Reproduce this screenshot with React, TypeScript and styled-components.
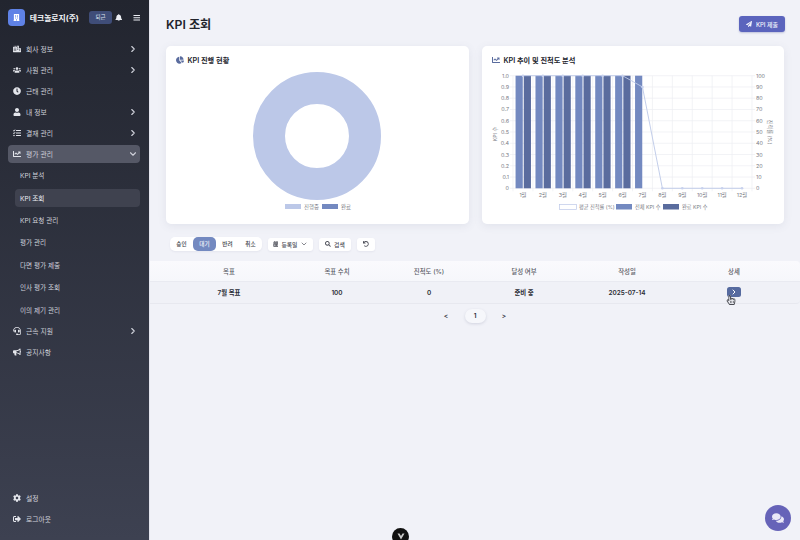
import React from 'react'
import styled, { createGlobalStyle } from 'styled-components'
import {
  FaBars,
  FaBell,
  FaBullhorn,
  FaBuilding,
  FaCalendarAlt,
  FaChartLine,
  FaChartPie,
  FaClock,
  FaCog,
  FaComments,
  FaHeadset,
  FaPaperPlane,
  FaRegHandPointer,
  FaSearch,
  FaSignOutAlt,
  FaTasks,
  FaUndo,
  FaUser,
  FaUsers,
  FaCity,
} from 'react-icons/fa'
import { ChevronDown, ChevronRight } from 'lucide-react'

const GlobalStyle = createGlobalStyle`
  html, body {
    margin: 0;
    padding: 0;
    width: 800px;
    height: 540px;
    overflow: hidden;
    font-family: Inter, "Noto Sans CJK KR", sans-serif;
  }
  * { box-sizing: border-box; }
`

const Page = styled.div`
  position: relative;
  display: flex;
  width: 800px;
  height: 540px;
  overflow: hidden;
  background: #f1f2f8;
`

const Sidebar = styled.aside`
  display: flex;
  flex-direction: column;
  flex: 0 0 150px;
  min-width: 0;
  height: 540px;
  padding: 0 9px 11px 8px;
  border-right: 1px solid #e4e5ee;
  background: linear-gradient(180deg, #22252f 0%, #3d4151 100%);
  color: #d9dbe3;
`

const Brand = styled.div`
  display: flex;
  align-items: center;
  height: 38.5px;
  padding-bottom: 4px;
`

const Logo = styled.div`
  display: flex;
  align-items: center;
  justify-content: center;
  width: 17px;
  height: 17px;
  border-radius: 4px;
  background: #5f82e6;
  color: #fff;
  font-size: 7px;
`

const BrandName = styled.span`
  margin-left: 5px;
  width: 60px;
  color: #f4f5f8;
  font-size: 7.8px;
  font-weight: 700;
  white-space: nowrap;
`

const LeaveButton = styled.div`
  display: flex;
  align-items: center;
  justify-content: center;
  width: 23px;
  height: 13px;
  border-radius: 3px;
  background: #3f4d78;
  color: #dfe3f0;
  font-size: 5.5px;
`

const HeaderIcon = styled.span<{ $gap: number }>`
  display: flex;
  margin-left: ${({ $gap }) => $gap}px;
  color: #eceef3;
  font-size: 7.5px;
`

const Nav = styled.nav`
  display: flex;
  flex-direction: column;
`

const NavRow = styled.div<{ $open?: boolean }>`
  display: flex;
  align-items: center;
  gap: 5px;
  height: ${({ $open }) => ($open ? '18px' : '21px')};
  margin: ${({ $open }) => ($open ? '1.5px 0 1px' : '0')};
  padding: 0 2px 0 5px;
  border-radius: 4px;
  background: ${({ $open }) => ($open ? '#555866' : 'transparent')};
  color: #cfd1da;
  font-size: 6.8px;
  font-weight: 400;
  svg { flex-shrink: 0; }
`

const RowIcon = styled.span`
  display: flex;
  color: #e4e6ec;
  font-size: 8px;
`

const RowLabel = styled.span`
  flex: 1;
`

const SubRow = styled.div<{ $active?: boolean }>`
  display: flex;
  align-items: center;
  height: 22.4px;
  padding-left: 5px;
  margin-left: 7px;
  color: ${({ $active }) => ($active ? '#eceef3' : '#cfd1da')};
  font-size: 6.6px;
  font-weight: 400;
  position: relative;
  z-index: 0;

  &::before {
    content: '';
    display: ${({ $active }) => ($active ? 'block' : 'none')};
    position: absolute;
    z-index: -1;
    inset: 2.5px 0 2px 0;
    border-radius: 4px;
    background: #3f424f;
  }
`

const NavBottom = styled(Nav)`
  margin-top: auto;
`

const Main = styled.main`
  display: flex;
  flex-direction: column;
  flex: 1;
  min-width: 0;
`

const Head = styled.header`
  display: flex;
  align-items: center;
  justify-content: space-between;
  height: 46px;
  padding: 2px 15px 0 16px;
`

const Title = styled.h1`
  margin: 0;
  color: #22242c;
  font-size: 12.2px;
  font-weight: 600;
`

const SubmitButton = styled.div`
  display: flex;
  align-items: center;
  justify-content: center;
  gap: 4px;
  width: 46px;
  height: 16px;
  border-radius: 3px;
  background: #5b64bd;
  color: #f0f1fb;
  font-size: 6px;
  font-weight: 500;
  box-shadow: 0 1px 2px rgba(70, 76, 150, 0.3);
`

const Charts = styled.section`
  display: grid;
  grid-template-columns: 303px 302px;
  gap: 13px;
  height: 178px;
  padding-left: 16px;
  margin-bottom: 13px;
`

const Card = styled.div`
  display: flex;
  flex-direction: column;
  border-radius: 5px;
  background: #fff;
  box-shadow: 0 2px 8px rgba(90, 95, 130, 0.1);
`

const CardTitle = styled.div`
  display: flex;
  align-items: center;
  gap: 3.5px;
  height: 22px;
  padding: 6px 0 0 10px;
  color: #22242c;
  font-size: 7.2px;
  font-weight: 600;
  svg { color: #5a6c9e; font-size: 8px; }
`

const ChartSvg = styled.svg`
  display: block;
  flex: none;
`

const Filters = styled.div`
  display: flex;
  align-items: center;
  gap: 6px;
  height: 14px;
  padding-left: 20px;
  margin-bottom: 10px;
`

const Segment = styled.div`
  display: flex;
  height: 14px;
  border-radius: 5px;
  background: #fff;
  box-shadow: 0 1px 2px rgba(90, 95, 130, 0.08);
`

const SegmentItem = styled.div<{ $active?: boolean }>`
  display: flex;
  align-items: center;
  justify-content: center;
  width: 23px;
  border-radius: 5px;
  background: ${({ $active }) => ($active ? '#7389c0' : 'transparent')};
  color: ${({ $active }) => ($active ? '#f2f4fa' : '#3a3c46')};
  font-size: 5.6px;
  font-weight: 500;
`

const FilterButton = styled.div<{ $width: number }>`
  display: flex;
  align-items: center;
  justify-content: center;
  gap: 3px;
  width: ${({ $width }) => $width}px;
  height: 13px;
  border-radius: 3px;
  background: #fff;
  color: #4b4d57;
  font-size: 5.8px;
  font-weight: 500;
  box-shadow: 0 1px 2px rgba(90, 95, 130, 0.08);
`

const TableHead = styled.div`
  display: grid;
  grid-template-columns: 116px 100px 84px 106px 100px 114px;
  align-items: center;
  height: 20px;
  padding-left: 21px;
  border-radius: 0 4px 0 0;
  background: linear-gradient(180deg, #fafafd, #f6f7fb);
  color: #585a64;
  font-size: 6.4px;
  font-weight: 500;
  text-align: center;
`

const TableRow = styled(TableHead)`
  position: relative;
  height: 23px;
  border-radius: 0 0 4px 0;
  background: #f0f1f7;
  border-top: 1px solid #e9eaf1;
  border-bottom: 1px solid #e7e8ef;
  color: #2a2c34;
  font-weight: 600;
`

const DetailButton = styled.div`
  display: inline-flex;
  align-items: center;
  justify-content: center;
  width: 14px;
  height: 10px;
  border-radius: 2.5px;
  background: #566a9f;
  color: #fff;
`

const Pointer = styled.span`
  position: absolute;
  left: 576px;
  top: 13px;
  color: #30323a;
  font-size: 10px;
  line-height: 0;

  svg { fill: #4a4c54; filter: drop-shadow(0 0 0.5px #fff); }
`

const Pagination = styled.div`
  display: flex;
  align-items: center;
  justify-content: center;
  gap: 10px;
  height: 14px;
  margin-top: 5px;
  color: #2a2c34;
  font-size: 6.5px;
  font-weight: 600;
`

const PageArrow = styled.span`
  width: 13px;
  text-align: center;
`

const PageNumber = styled.span`
  width: 21px;
  height: 14px;
  margin: 0 2px;
  border-radius: 7px;
  background: #f6f7fb;
  text-align: center;
  line-height: 14px;
  box-shadow: 0 1px 3px rgba(90, 95, 130, 0.2);
`

const ChatBubble = styled.div`
  position: absolute;
  right: 9px;
  bottom: 9px;
  display: flex;
  align-items: center;
  justify-content: center;
  width: 26px;
  height: 26px;
  border-radius: 50%;
  background: #6663b8;
  color: #e9e8f7;
  font-size: 12px;
`

const DevBadge = styled.div`
  position: absolute;
  left: 392px;
  bottom: -5px;
  display: flex;
  justify-content: center;
  width: 17px;
  height: 17px;
  padding-top: 5px;
  border-radius: 50%;
  background: #111;
`

type MenuItem = { icon: React.ReactNode; label: string; arrow?: boolean }

const topMenu: MenuItem[] = [
  { icon: <FaCity />, label: '회사 정보', arrow: true },
  { icon: <FaUsers />, label: '사원 관리', arrow: true },
  { icon: <FaClock />, label: '근태 관리' },
  { icon: <FaUser />, label: '내 정보', arrow: true },
  { icon: <FaTasks />, label: '결재 관리', arrow: true },
]

const subMenu = ['KPI 분석', 'KPI 조회', 'KPI 요청 관리', '평가 관리', '다면 평가 제출', '인사 평가 조회', '이의 제기 관리']

const columns = ['목표', '목표 수치', '진척도 (%)', '달성 여부', '작성일', '상세']

const MenuRow = ({ icon, label, arrow }: MenuItem) => (
  <NavRow>
    <RowIcon>{icon}</RowIcon>
    <RowLabel>{label}</RowLabel>
    {arrow && <ChevronRight size={10} strokeWidth={2.6} />}
  </NavRow>
)

// 차트 좌표는 스크린샷 기준 그대로 viewBox 로 맞춘다
const DonutChart = () => {
  const r = 48
  return (
    <ChartSvg width={303} height={148} viewBox="166 68 303 148">
      <circle cx={317} cy={136} r={r} fill="none" stroke="#bcc8e8" strokeWidth={32} />
      <rect x={285} y={204} width={16} height={5} fill="#bcc8e8" />
      <text x={304} y={208.5} fontSize={5.4} fill="#7a7c85">진행중</text>
      <rect x={322} y={204} width={16} height={5} fill="#7389c0" />
      <text x={341} y={208.5} fontSize={5.4} fill="#7a7c85">완료</text>
    </ChartSvg>
  )
}

const months = ['1월', '2월', '3월', '4월', '5월', '6월', '7월', '8월', '9월', '10월', '11월', '12월']
const progress = [100, 100, 100, 100, 100, 100, 90, 0, 0, 0, 0, 0]
const left = 513
const right = 752
const bottom = 188.3
const top = 75.7
const step = (right - left) / 12
const rowH = (bottom - top) / 10

const TrendChart = () => {
  const cx = (i: number) => left + step * (i + 0.5)
  const py = (v: number) => bottom - ((bottom - top) * v) / 100
  const line = progress.map((v, i) => `${cx(i)},${py(v)}`).join(' ')
  return (
    <ChartSvg width={302} height={148} viewBox="482 68 302 148">
      {Array.from({ length: 11 }, (_, i) => (
        <g key={i}>
          <line x1={left - 3} x2={right + 3} y1={bottom - rowH * i} y2={bottom - rowH * i} stroke="#eceef2" strokeWidth={0.7} />
          <text x={509} y={bottom - rowH * i + 2} fontSize={5.4} fill="#7a7c85" textAnchor="end">
            {i === 0 ? '0' : i === 10 ? '1.0' : (i / 10).toFixed(1)}
          </text>
          <text x={756} y={bottom - rowH * i + 2} fontSize={5.4} fill="#7a7c85">{i * 10}</text>
        </g>
      ))}
      {Array.from({ length: 13 }, (_, i) => (
        <line key={i} x1={left + step * i} x2={left + step * i} y1={top} y2={bottom + 3} stroke="#eceef2" strokeWidth={0.7} />
      ))}
      {months.map((m, i) => (
        <text key={m} x={cx(i)} y={197} fontSize={5.4} fill="#7a7c85" textAnchor="middle">{m}</text>
      ))}
      {progress.slice(0, 7).map((_, i) => (
        <g key={i}>
          <rect x={cx(i) - 7.4} y={top} width={7.2} height={bottom - top} fill="#7389c0" />
          {i < 6 && <rect x={cx(i) + 0.8} y={top} width={7.2} height={bottom - top} fill="#5a6c9e" />}
        </g>
      ))}
      <polyline points={line} fill="none" stroke="#bcc8e8" strokeWidth={0.9} />
      {progress.map((v, i) => (
        <circle key={i} cx={cx(i)} cy={py(v)} r={1.3} fill="#c8d2ee" />
      ))}
      <text transform="translate(497 134) rotate(-90)" fontSize={5.2} fill="#7a7c85" textAnchor="middle">KPI 수</text>
      <text transform="translate(768 132) rotate(90)" fontSize={5.2} fill="#7a7c85" textAnchor="middle">진척률 (%)</text>
      <rect x={559.5} y={204.5} width={17} height={5} fill="#fff" stroke="#bcc8e8" strokeWidth={0.7} />
      <text x={579} y={208.8} fontSize={5.2} fill="#7a7c85">평균 진척률 (%)</text>
      <rect x={616} y={204} width={16} height={5.5} fill="#7389c0" />
      <text x={635} y={208.8} fontSize={5.2} fill="#7a7c85">전체 KPI 수</text>
      <rect x={663} y={204} width={16} height={5.5} fill="#5a6c9e" />
      <text x={682} y={208.8} fontSize={5.2} fill="#7a7c85">완료 KPI 수</text>
    </ChartSvg>
  )
}

export default function App() {
  return (
    <Page>
      <GlobalStyle />
      <Sidebar>
        <Brand>
          <Logo><FaBuilding /></Logo>
          <BrandName>테크놀로지(주)</BrandName>
          <LeaveButton>퇴근</LeaveButton>
          <HeaderIcon $gap={3}><FaBell /></HeaderIcon>
          <HeaderIcon $gap={10}><FaBars /></HeaderIcon>
        </Brand>
        <Nav>
          {topMenu.map((item) => (
            <MenuRow key={item.label} {...item} />
          ))}
          <NavRow $open>
            <RowIcon><FaChartLine /></RowIcon>
            <RowLabel>평가 관리</RowLabel>
            <ChevronDown size={10} strokeWidth={2.6} />
          </NavRow>
          {subMenu.map((label) => (
            <SubRow key={label} $active={label === 'KPI 조회'}>{label}</SubRow>
          ))}
          <MenuRow icon={<FaHeadset />} label="근속 지원" arrow />
          <MenuRow icon={<FaBullhorn />} label="공지사항" />
        </Nav>
        <NavBottom>
          <MenuRow icon={<FaCog />} label="설정" />
          <MenuRow icon={<FaSignOutAlt />} label="로그아웃" />
        </NavBottom>
      </Sidebar>
      <Main>
        <Head>
          <Title>KPI 조회</Title>
          <SubmitButton><FaPaperPlane />KPI 제출</SubmitButton>
        </Head>
        <Charts>
          <Card>
            <CardTitle><FaChartPie />KPI 진행 현황</CardTitle>
            <DonutChart />
          </Card>
          <Card>
            <CardTitle><FaChartLine />KPI 추이 및 진척도 분석</CardTitle>
            <TrendChart />
          </Card>
        </Charts>
        <Filters>
          <Segment>
            <SegmentItem>승인</SegmentItem>
            <SegmentItem $active>대기</SegmentItem>
            <SegmentItem>반려</SegmentItem>
            <SegmentItem>취소</SegmentItem>
          </Segment>
          <FilterButton $width={45}><FaCalendarAlt />등록일<ChevronDown size={8} /></FilterButton>
          <FilterButton $width={32}><FaSearch />검색</FilterButton>
          <FilterButton $width={18}><FaUndo /></FilterButton>
        </Filters>
        <TableHead>
          {columns.map((c) => <span key={c}>{c}</span>)}
        </TableHead>
        <TableRow>
          <span>7월 목표</span>
          <span>100</span>
          <span>0</span>
          <span>준비 중</span>
          <span>2025-07-14</span>
          <span><DetailButton><ChevronRight size={8} strokeWidth={3} /></DetailButton></span>
          <Pointer><FaRegHandPointer /></Pointer>
        </TableRow>
        <Pagination>
          <PageArrow>&lt;</PageArrow>
          <PageNumber>1</PageNumber>
          <PageArrow>&gt;</PageArrow>
        </Pagination>
      </Main>
      <DevBadge>
        <svg width="8" height="7" viewBox="0 0 8 7"><path d="M0.5 0.5 L4 6.5 L7.5 0.5 L5.5 0.5 L4 3 L2.5 0.5 Z" fill="#c9c9c9" /></svg>
      </DevBadge>
      <ChatBubble><FaComments /></ChatBubble>
    </Page>
  )
}
